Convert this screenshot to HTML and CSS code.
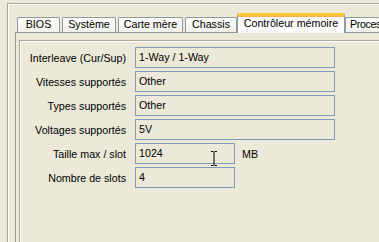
FILE: index.html
```html
<!DOCTYPE html>
<html>

	<head>
		<meta charset="UTF-8">
		<title>Contrôleur mémoire</title>
		<link rel="stylesheet" href="styles.css">
	</head>

	<body>
		<div class="window">
			<div class="tabs">
				<div class="tab tab-bios">BIOS</div>
				<div class="tab tab-sys">Système</div>
				<div class="tab tab-mb">Carte mère</div>
				<div class="tab tab-chassis">Chassis</div>
				<div class="tab tab-active">Contrôleur mémoire</div>
				<div class="tab tab-cpu">Proces</div>
			</div>
			<div class="page">
				<div class="group">
					<div class="rows">
						<div class="lbl">Interleave (Cur/Sup)</div>
						<div class="field wide">1-Way / 1-Way</div>

						<div class="lbl">Vitesses supportés</div>
						<div class="field wide">Other</div>

						<div class="lbl">Types supportés</div>
						<div class="field wide">Other</div>

						<div class="lbl">Voltages supportés</div>
						<div class="field wide">5V</div>

						<div class="lbl">Taille max / slot</div>
						<div class="line">
							<div class="field short">1024</div>
							<span class="unit">MB</span>
						</div>

						<div class="lbl">Nombre de slots</div>
						<div class="field short">4</div>
					</div>
				</div>
			</div>
		</div>

		<!-- curseur texte -->
		<svg class="ibeam" width="8" height="15" viewBox="0 0 8 15">
			<path d="M1 0.5h2.5M4.5 0.5h2.5M4 1v13M1 14.5h2.5M4.5 14.5h2.5" stroke="#000" stroke-width="1" fill="none"/>
		</svg>
	</body>

</html>
```

FILE: styles.css
```css
html,
body {
	margin: 0;
	padding: 0;
}

body {
	width: 379px;
	height: 242px;
	overflow: hidden;
	position: relative;
	background-color: #ece9d8;
	font-family: "Liberation Sans", Arial, sans-serif;
	font-size: 10.7px;
	color: #000;
}

.window {
	box-sizing: border-box;
	margin: 3px 0 0 7px;
	width: 372px;
	height: 239px;
	padding: 9px 0 0 7px;
	border-top: 1px solid #aca899;
	border-left: 1px solid #aca899;
	box-shadow: inset 1px 1px 0 #fff;
	display: flex;
	flex-direction: column;
	overflow: hidden;
}

.tabs {
	display: flex;
	align-items: flex-end;
	height: 19px;
	padding-left: 2px;
}

.tab {
	box-sizing: border-box;
	flex-shrink: 0;
	height: 15px;
	line-height: 13px;
	margin-right: 2px;
	border: 1px solid #919b9c;
	border-bottom: none;
	border-radius: 2px 2px 0 0;
	background: linear-gradient(#fefefe, #f1f0ea);
	text-align: center;
	white-space: nowrap;
	overflow: hidden;
}

.tab-bios {
	width: 43px;
}

.tab-sys {
	width: 54px;
}

.tab-mb {
	width: 65px;
}

.tab-chassis {
	width: 52px;
	margin-right: 0;
}

.tab-active {
	width: 108px;
	height: 20px;
	line-height: 14px;
	margin-right: 0;
	margin-bottom: -1px;
	position: relative;
	border-top: 3px solid #ffc83c;
	box-shadow: inset 0 1px 0 #f7b44a;
	background: #fcfcfe;
}

.tab-cpu {
	flex-shrink: 1;
	width: 40px;
	text-align: left;
	padding-left: 4px;
	letter-spacing: -0.4px;
	border-right: none;
	overflow: visible;
}

.page {
	flex: 1;
	padding: 7px 0 0 3px;
	border-top: 1px solid #919b9c;
	border-left: 1px solid #919b9c;
	display: flex;
	flex-direction: column;
}

.group {
	flex: 1;
	padding-top: 6px;
	border-top: 1px solid #aca899;
	border-left: 1px solid #aca899;
	box-shadow: inset 1px 1px 0 #fff;
}

.rows {
	display: grid;
	grid-template-columns: 106px auto;
	grid-auto-rows: 21px;
	column-gap: 9px;
	row-gap: 3px;
	align-items: center;
	justify-items: start;
}

.lbl {
	justify-self: end;
	white-space: nowrap;
}

.field {
	box-sizing: border-box;
	height: 21px;
	line-height: 19px;
	padding-left: 3px;
	border: 1px solid #7f9db9;
	background-color: #ece9d8;
}

.wide {
	width: 200px;
}

.short {
	width: 100px;
}

.line {
	display: flex;
	align-items: center;
	gap: 7px;
}

.ibeam {
	position: absolute;
	left: 210px;
	top: 151px;
}
```
